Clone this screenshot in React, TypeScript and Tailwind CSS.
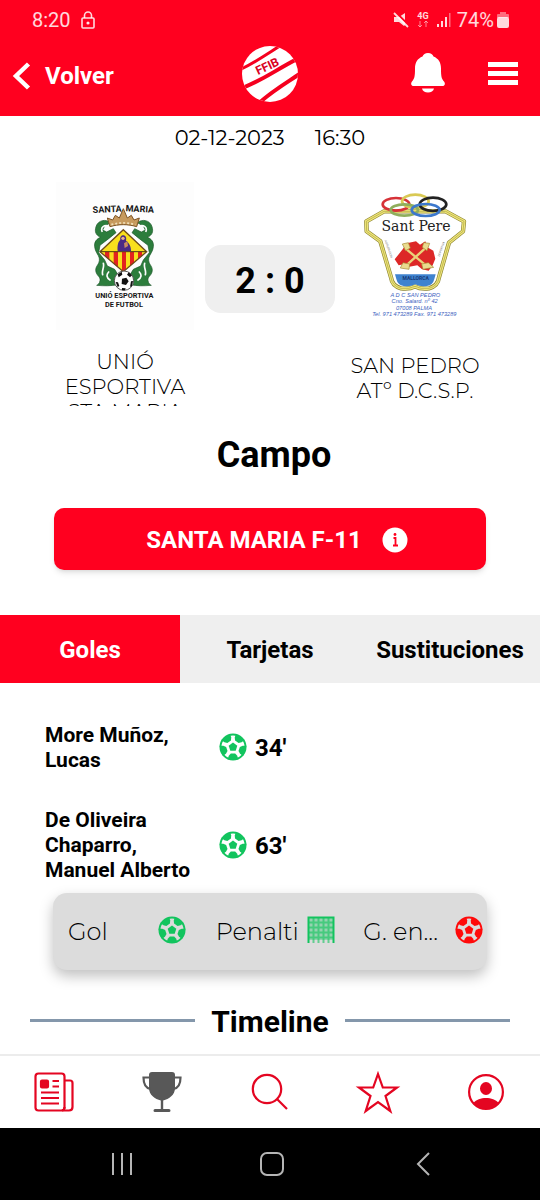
import React, { useState } from 'react';

const light = "font-['Montserrat','Inter',sans-serif] font-light";

interface BallProps {
  className: string;
}

const Ball: React.FC<BallProps> = ({ className }) => (
  <svg viewBox="0 0 28 28" className={`w-7 h-7 shrink-0 ${className}`} fill="currentColor" aria-hidden="true">
    <circle cx="14" cy="14" r="12.5" fill="none" stroke="currentColor" strokeWidth="2" />
    <path d="M14 9.6l4.3 3.1-1.6 5h-5.4l-1.6-5z" />
    {[0, 72, 144, 216, 288].map((angle) => (
      <path key={angle} d="M8.6 26.5l1.2-3.7 2-2.3h4.4l2 2.3 1.2 3.7z" transform={`rotate(${angle} 14 14)`} />
    ))}
  </svg>
);

const Net: React.FC = () => (
  <svg viewBox="0 0 28 28" className="w-7 h-7 shrink-0 text-[#12c45e]" fill="none" stroke="currentColor" aria-hidden="true">
    <rect x="1" y="1" width="26" height="23" fill="currentColor" opacity=".35" stroke="none" />
    <path d="M6.5 1v26M11.5 1v26M16.5 1v26M21.5 1v26M1 6.5h26M1 11.5h26M1 16.5h26M1 21.5h26" strokeWidth="2" opacity=".6" />
    <path d="M1.5 27V1.5h25V27" strokeWidth="2" />
  </svg>
);

const FederationLogo: React.FC = () => (
  <svg viewBox="0 0 58 58" className="w-[58px] h-[58px]" role="img" aria-label="FFIB">
    <defs>
      <clipPath id="disc">
        <circle cx="29" cy="29" r="28" />
      </clipPath>
    </defs>
    <g clipPath="url(#disc)">
      <rect width="58" height="58" fill="#fff" />
      <g stroke="#f5001f" fill="none">
        <path d="M-2 25C12 19 26 9 42 -1" strokeWidth="3" />
        <path d="M-2 44C18 38 34 25 60 12" strokeWidth="4" />
        <path d="M16 60C28 48 42 40 60 28" strokeWidth="4" />
      </g>
      <text x="17" y="30" transform="rotate(-25 17 30)" fontSize="12" fontWeight="700" fill="#d9001f" fontFamily="Roboto, sans-serif">
        FFIB
      </text>
    </g>
  </svg>
);

const dragon =
  'M182 128c-14-12-38-8-44 12-5 16 0 26 14 32-12 4-20 14-18 28 2 20 16 26 14 42-2 14-14 18-10 34 3 12 14 14 12 26-1 8-6 12-10 14 22 2 44 2 62-2l4-26-12-20-22-10-8-18-18-22 4-22 26-20 22-18-8-12-20 10-12-6 6-12z';

const SantaMariaCrest: React.FC = () => (
  <svg viewBox="18 6 414 444" className="w-full" role="img" aria-label="Escudo Santa Maria">
    <rect x="18" y="6" width="414" height="444" fill="#fdfdfd" />
    <g fontFamily="'Liberation Sans Narrow', Roboto, sans-serif" fontWeight="700" fill="#151515" textAnchor="middle">
      <text x="172" y="97" fontSize="27" transform="rotate(-3 172 97)">SANTA</text>
      <text x="269" y="96" fontSize="27" transform="rotate(3 269 96)">MARIA</text>
      <text x="223" y="354" fontSize="22">UNIÓ ESPORTIVA</text>
      <text x="222" y="380" fontSize="22">DE FUTBOL</text>
    </g>
    <g fill="#2c7d3c" stroke="#185426" strokeWidth="2">
      <path d={dragon} />
      <path d={dragon} transform="translate(444 0) scale(-1 1)" />
    </g>
    <g fill="none" stroke="#fdfdfd" strokeWidth="5" strokeLinecap="round">
      <path d="M176 138c-14-4-24 4-20 16M164 196c-8 4-12 10-8 20M160 250c4 12-6 22-2 34M176 276c-8 8-6 18 4 24" />
      <path d="M268 138c14-4 24 4 20 16M280 196c8 4 12 10 8 20M284 250c-4 12 6 22 2 34M268 276c8 8 6 18-4 24" />
    </g>
    <path d="M180 140l-8-26 16 6 8-14 12 8 12-28 12 28 12-8 8 14 16-6-8 26c-26-8-54-8-80 0z" fill="#c79a5d" stroke="#7b5324" strokeWidth="3" />
    <path d="M184 134c24-7 48-7 72 0" fill="none" stroke="#f1e0b8" strokeWidth="5" strokeDasharray="6 6" />
    <path d="M220 149l70 66-70 60-70-60z" fill="#f8df1d" />
    <path d="M165 216h13v23l-13-11zM191 216h13v46l-13-11zM216 216h12v52l-8 6-4-4zM240 216h12v32l-12 10zM264 216h12v11l-12 10z" fill="#e3221f" />
    <path d="M220 149l70 66-70 60-70-60z" fill="none" stroke="#6d4a18" strokeWidth="4" />
    <path d="M152 215h136" stroke="#4d3510" strokeWidth="3" />
    <path d="M203 214c-2-18 2-30 8-34-2-10 4-15 10-14 7 1 9 9 7 16 10 6 16 20 15 32z" fill="#4a2a86" />
    <circle cx="219" cy="175" r="5" fill="#e9b48a" />
    <path d="M222 190l10-6 2 14-10 6z" fill="#c98b62" />
    <circle cx="222" cy="302" r="29" fill="#fff" stroke="#555" strokeWidth="3" />
    <path d="M216 296l13-3 7 11-8 11-13-3zM203 283l12-8 2 9-11 8zM236 277l10 9-6 6-9-8zM197 306l7 1 4 11-5 3zM243 304l6-1-3 15-6 3zM216 324l11 1-2 6h-9z" fill="#111" />
  </svg>
);

const shield =
  'M135 94l-53 30 1 30 41 30 32 108q3 26 30 33 26 3 42-6 16 9 42 6 27-7 30-33l30-104 42-34 3-30-55-30z';

const SantPereCrest: React.FC = () => (
  <svg viewBox="21 6 414 444" className="w-full" role="img" aria-label="Escudo Sant Pere">
    <path d={shield} fill="#fff" stroke="#8f8632" strokeWidth="13" strokeLinejoin="round" />
    <path d={shield} fill="none" stroke="#f0e77a" strokeWidth="9" strokeLinejoin="round" />
    <path d={shield} fill="none" stroke="#a9a044" strokeWidth="2" strokeLinejoin="round" />
    <path d="M168 283h122l-4 14q-4 18-22 21-20 3-35-5-16 8-35 5-18-3-22-21z" fill="#3f83cf" />
    <path d="M167 238l24-30 12-18 28-6 12 10 16-10 6 18 18 10 6 24-8 20-12 16-20-4-14-12-24 4-14-8-18 4z" fill="#dd2727" />
    <path d="M200 206l58 48M264 200l-62 56" stroke="#ead27a" strokeWidth="7" fill="none" strokeLinecap="round" />
    <g fill="#eadb8e" stroke="#a3892f" strokeWidth="2">
      <path d="M190 192l18-4 6 16-14 8zM272 190l-18-2-4 14 14 10zM192 248l20 4-2 16-26-4zM268 248l-20 4 4 16 32-6z" />
    </g>
    <g fill="none" strokeWidth="8">
      <ellipse cx="171" cy="73" rx="40" ry="19" stroke="#d63238" />
      <ellipse cx="229" cy="64" rx="40" ry="20" stroke="#d9c954" />
      <ellipse cx="282" cy="73" rx="40" ry="20" stroke="#222" />
      <ellipse cx="196" cy="90" rx="41" ry="17" stroke="#8fae5c" />
      <ellipse cx="260" cy="90" rx="42" ry="18" stroke="#3c78cc" />
    </g>
    <g textAnchor="middle">
      <text x="231" y="153" fontSize="42" fontFamily="'DejaVu Serif', serif" fill="#222">Sant Pere</text>
      <text x="230" y="301" fontSize="15" fontFamily="Roboto, sans-serif" fontWeight="700" fill="#173a78">MALLORCA</text>
      <g fontFamily="'Liberation Sans', sans-serif" fontStyle="italic" fontSize="17" fill="#3c62c0">
        <text x="229" y="350">A D C SAN PEDRO</text>
        <text x="227" y="370">Cno. Salard. nº 42</text>
        <text x="225" y="389">07008 PALMA</text>
        <text x="226" y="407">Tel. 971 473289  Fax. 971 473289</text>
      </g>
      <g fontFamily="Roboto, sans-serif" fontSize="9" fill="#777">
        <text x="146" y="208" transform="rotate(70 146 208)">AGRUPACION</text>
        <text x="310" y="208" transform="rotate(-70 310 208)">DEPORTIVA</text>
      </g>
    </g>
  </svg>
);

const StatusBar: React.FC = () => (
  <div className="flex items-center justify-between h-10 pl-8 pr-[31px] text-xl text-white/85">
    <div className="flex items-center gap-[10px]">
      <span>8:20</span>
      <svg viewBox="0 0 14 18" className="w-[14px] h-[18px]" fill="none" stroke="currentColor" strokeWidth="1.6">
        <rect x="1" y="7" width="12" height="10" rx="1" />
        <path d="M3.5 7V4.5a3.5 3.5 0 0 1 7 0V7" />
        <circle cx="7" cy="12" r=".8" fill="currentColor" />
      </svg>
    </div>
    <div className="flex items-center gap-[6px]">
      <svg viewBox="0 0 16 16" className="w-4 h-4" fill="currentColor">
        <path d="M1 5h5l6-4v12l-1 1-5-4H1z" />
        <path d="M2.5 0L16 13.5" stroke="#ff001f" strokeWidth="2" />
        <path d="M1 1l14 14" stroke="currentColor" strokeWidth="1.8" />
      </svg>
      <svg viewBox="0 0 16 18" className="w-4 h-[18px]" fill="none" stroke="currentColor">
        <text x="8" y="8" textAnchor="middle" fontSize="9" fontWeight="700" fill="currentColor" stroke="none">4G</text>
        <path d="M5 10v6M3 14l2 2 2-2M11 16v-6M9 12l2-2 2 2" opacity=".6" />
      </svg>
      <svg viewBox="0 0 14 16" className="w-[14px] h-4" fill="currentColor">
        <path d="M0 12h2v3H0zM4 9h2v6H4zM8 5h2v10H8z" />
        <path d="M12 1h1.5v14H12z" opacity=".5" />
      </svg>
      <div className="flex items-center gap-[3px]">
        <span>74%</span>
        <svg viewBox="0 0 12 16" className="w-3 h-4" fill="currentColor">
          <path d="M3 0h6v2h2q1 0 1 1v3H0V3q0-1 1-1h2z" opacity=".5" />
          <rect y="5" width="12" height="11" rx="2" />
        </svg>
      </div>
    </div>
  </div>
);

const Header: React.FC = () => (
  <header className="bg-[#ff001f] text-white">
    <StatusBar />
    <div className="grid grid-cols-3 items-center h-[76px] pb-1 pl-3 pr-[22px]">
      <button className="flex items-center gap-[14px] text-2xl font-bold">
        <svg viewBox="0 0 19 28" className="w-[19px] h-7" fill="none" stroke="currentColor" strokeWidth="4.5">
          <path d="M16.5 2L4 14l12.5 12" />
        </svg>
        Volver
      </button>
      <div className="flex justify-center pb-1 pl-[10px]">
        <FederationLogo />
      </div>
      <div className="flex items-center justify-end gap-[42px] pb-1">
        <button aria-label="Notificaciones">
          <svg viewBox="0 0 36 42" className="w-9 h-[42px]" fill="currentColor">
            <path d="M18 0c3 0 4.5 1.5 5.5 3.5 5 2 7.5 6 7.5 12 0 8 .5 10 3 13 1.5 2 1 4.5-1.5 4.5h-29C1 33 .5 30.5 2 28.5c2.5-3 3-5 3-13 0-6 2.5-10 7.5-12C13.5 1.5 15 0 18 0zM12 35.5h12c-.5 2.5-3 4-6 4s-5.5-1.5-6-4z" />
          </svg>
        </button>
        <button aria-label="Menú">
          <svg viewBox="0 0 30 24" className="w-[30px] h-6" fill="currentColor">
            <path d="M0 0h30v5H0zM0 9h30v5H0zM0 18h30v5H0z" />
          </svg>
        </button>
      </div>
    </div>
  </header>
);

interface TeamProps {
  name: string;
  children: React.ReactNode;
}

const Team: React.FC<TeamProps> = ({ name, children }) => (
  <div className="w-[138px]">
    {children}
    <div className={`flex justify-center [align-items:safe_center] mt-[19px] h-[57px] overflow-hidden text-center text-[21px] leading-[25px] ${light}`}>
      <p className="w-full">{name}</p>
    </div>
  </div>
);

const goals = [
  { player: 'More Muñoz, Lucas', minute: 34 },
  { player: 'De Oliveira Chaparro, Manuel Alberto', minute: 63 },
];

const tabs = ['Goles', 'Tarjetas', 'Sustituciones'];

const BottomNav: React.FC = () => (
  <nav className="grid grid-cols-5 h-[74px] border-t-2 border-[#ececec] text-[#e40521]">
    <button className="flex items-center justify-center" aria-label="Noticias">
      <svg viewBox="0 0 40 40" className="w-10 h-10" fill="none" stroke="currentColor" strokeWidth="2.2">
        <rect x="1.5" y="1.5" width="29" height="37" rx="3" />
        <path d="M30.5 8.5H36q2.5 0 2.5 2.5v24q0 3.5-3.5 3.5h-7q2.5-.5 2.5-3.5" />
        <rect x="7" y="8.5" width="7" height="7" rx="1" fill="currentColor" />
        <path d="M18.5 9H25M18.5 14.5H25M7 20.5h18M7 26h18M7 31.5h18" />
      </svg>
    </button>
    <button className="flex items-center justify-center text-[#585858]" aria-label="Competiciones">
      <svg viewBox="0 0 40 40" className="w-10 h-10" fill="currentColor">
        <path d="M10 0h20q3 0 3 3v13c0 7-6 11-11.8 12.5V37H27q1.5 0 1.5 1.5T27 40H13q-1.5 0-1.5-1.5T13 37h5.8v-8.5C13 27 7 23 7 16V3q0-3 3-3z" />
        <path d="M8 5.5H1.5c0 6.5 2 10.5 7 11.5M32 5.5h6.5c0 6.5-2 10.5-7 11.5" fill="none" stroke="currentColor" strokeWidth="2.2" />
      </svg>
    </button>
    <button className="flex items-center justify-center" aria-label="Buscar">
      <svg viewBox="0 0 40 40" className="w-10 h-10" fill="none" stroke="currentColor" strokeWidth="2.2">
        <circle cx="17" cy="17" r="14.2" />
        <path d="M27 27l10 10" />
      </svg>
    </button>
    <button className="flex items-center justify-center" aria-label="Favoritos">
      <svg viewBox="0 0 46 44" className="w-[46px] h-11" fill="none" stroke="currentColor" strokeWidth="2.2">
        <path d="M23 4l4.8 13.5H42L30.5 26l4.8 15L23 32l-12.3 9 4.800-15L4 17.5h14.2z" />
      </svg>
    </button>
    <button className="flex items-center justify-center" aria-label="Perfil">
      <svg viewBox="0 0 36 36" className="w-9 h-9" fill="currentColor">
        <circle cx="18" cy="18" r="16.9" fill="none" stroke="currentColor" strokeWidth="2.2" />
        <ellipse cx="18" cy="14.5" rx="6" ry="6.5" />
        <path d="M5.5 29C8 25.5 13 24 18 24s10 1.5 12.5 5C27 33 23 35 18 35S9 33 5.5 29z" />
      </svg>
    </button>
  </nav>
);

const SystemNav: React.FC = () => (
  <div className="grid grid-cols-[28%_28%_28%] justify-center pl-1 h-[72px] bg-black text-[#b5b5b5]">
    <button className="flex items-center justify-center" aria-label="Recientes">
      <svg viewBox="0 0 24 24" className="w-6 h-6" stroke="currentColor" strokeWidth="2">
        <path d="M3 1v22M12 1v22M21 1v22" />
      </svg>
    </button>
    <button className="flex items-center justify-center" aria-label="Inicio">
      <svg viewBox="0 0 26 26" className="w-[26px] h-[26px]" fill="none" stroke="currentColor" strokeWidth="2">
        <rect x="2" y="2" width="22" height="22" rx="6" />
      </svg>
    </button>
    <button className="flex items-center justify-center" aria-label="Atrás">
      <svg viewBox="0 0 24 26" className="w-6 h-[26px]" fill="none" stroke="currentColor" strokeWidth="2">
        <path d="M19 2L8 13l11 11" />
      </svg>
    </button>
  </div>
);

const App: React.FC = () => {
  const [activeTab, setActiveTab] = useState('Goles');

  return (
    <div className="flex flex-col min-h-screen bg-white text-black font-['Roboto',sans-serif]">
      <Header />

      <main className="flex-1">
        <div className="flex justify-center gap-[30px] h-11 items-center text-[21px] font-['Montserrat','Inter',sans-serif]">
          <span>02-12-2023</span>
          <span>16:30</span>
        </div>

        <section className="flex justify-between px-14 pt-[22px]">
          <Team name="UNIÓ ESPORTIVA STA MARIA">
            <SantaMariaCrest />
          </Team>
          <div className="flex items-center justify-center w-[130px] h-[68px] mt-[63px] pt-1 rounded-2xl bg-[#efefef] text-4xl font-bold">
            2 : 0
          </div>
          <Team name="SAN PEDRO ATº D.C.S.P.">
            <SantPereCrest />
          </Team>
        </section>

        <h2 className="mt-[29px] pl-2 text-center text-4xl font-bold">Campo</h2>

        <div className="px-[54px] mt-[33px]">
          <button className="flex items-center justify-center gap-5 w-full h-[62px] pl-[14px] pt-[2px] rounded-[10px] bg-[#ff001f] text-2xl font-bold text-white shadow-md">
            SANTA MARIA F-11
            <svg viewBox="0 0 26 26" className="w-[26px] h-[26px]">
              <circle cx="13" cy="13" r="12.5" fill="#fff" />
              <path d="M11.5 11h2v8M11 18.5h5" fill="none" stroke="#ff001f" strokeWidth="1.8" />
              <circle cx="13" cy="7.5" r="1.4" fill="#ff001f" />
            </svg>
          </button>
        </div>

        <div role="tablist" className="grid grid-cols-3 h-[68px] mt-[45px] bg-[#efefef] text-2xl font-bold">
          {tabs.map((tab) => (
            <button
              key={tab}
              role="tab"
              aria-selected={tab === activeTab}
              onClick={() => setActiveTab(tab)}
              className={tab === activeTab ? 'pt-[2px] bg-[#ff001f] text-white' : 'pt-[2px]'}
            >
              {tab}
            </button>
          ))}
        </div>

        <ul className="flex flex-col gap-[35px] px-[45px] pt-10">
          {goals.map((goal) => (
            <li key={goal.minute} className="flex items-center">
              <span className="w-[150px] mr-6 text-[21px] leading-[25px] font-bold">{goal.player}</span>
              <Ball className="mb-[2px] text-[#12c45e]" />
              <span className="ml-2 text-2xl font-bold">{goal.minute}'</span>
            </li>
          ))}
        </ul>

        <div className={`grid grid-cols-3 gap-7 mx-[53px] mt-[10px] h-[77px] pl-[15px] pr-1 rounded-[14px] bg-[#dcdcdc] shadow-[0_6px_14px_rgba(0,0,0,0.25)] text-2xl ${light}`}>
          <div className="flex items-center justify-between pr-[2px]">
            Gol
            <Ball className="mb-1 text-[#12c45e]" />
          </div>
          <div className="flex items-center justify-between">
            Penalti
            <div className="mb-1">
              <Net />
            </div>
          </div>
          <div className="flex items-center justify-between">
            G. en...
            <Ball className="mb-1 text-[#ff0a0a]" />
          </div>
        </div>

        <div className="flex items-center gap-4 px-[30px] mt-8 mb-3">
          <hr className="flex-1 mb-1 border-t-[3px] border-[#8497ab]" />
          <h2 className="text-3xl leading-10 font-bold">Timeline</h2>
          <hr className="flex-1 mb-1 border-t-[3px] border-[#8497ab]" />
        </div>
      </main>

      <BottomNav />
      <SystemNav />
    </div>
  );
};

export default App;
